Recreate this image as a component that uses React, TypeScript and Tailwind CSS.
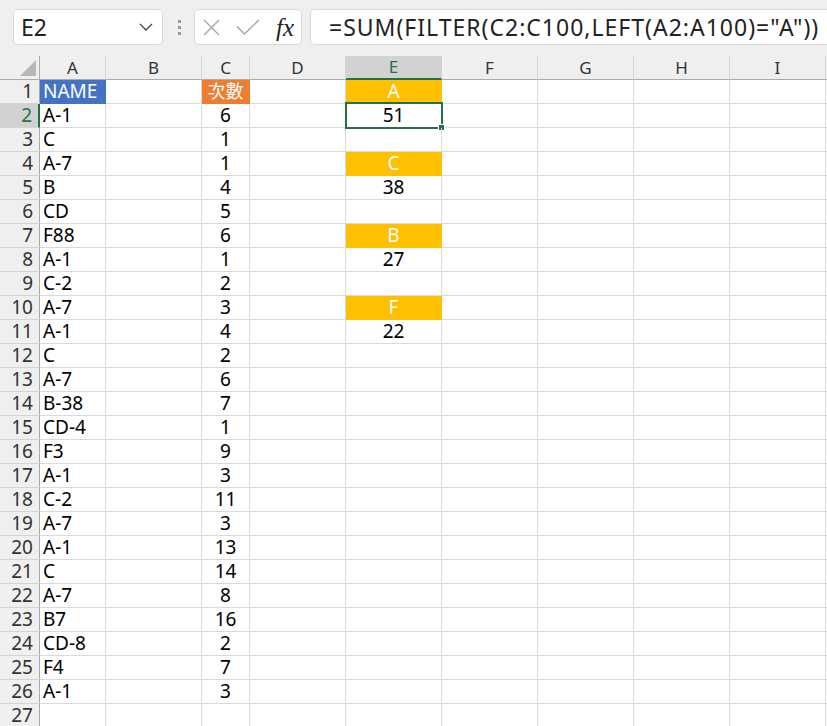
import React from "react";

const cols = [
  { key: "A", w: "w-[66px]" },
  { key: "B", w: "w-[96px]" },
  { key: "C", w: "w-[48px]" },
  { key: "D", w: "w-[96px]" },
  { key: "E", w: "w-[96px]" },
  { key: "F", w: "w-[96px]" },
  { key: "G", w: "w-[96px]" },
  { key: "H", w: "w-[96px]" },
  { key: "I", w: "w-[96px]" },
  { key: "", w: "w-[96px]" },
];

const names = [
  "NAME", "A-1", "C", "A-7", "B", "CD", "F88", "A-1", "C-2", "A-7", "A-1", "C", "A-7",
  "B-38", "CD-4", "F3", "A-1", "C-2", "A-7", "A-1", "C", "A-7", "B7", "CD-8", "F4", "A-1", "",
];

const counts = [
  "次數", "6", "1", "1", "4", "5", "6", "1", "2", "3", "4", "2", "6", "7", "1", "9", "3", "11",
  "3", "13", "14", "8", "16", "2", "7", "3", "",
];

// column E: header letters in yellow, sums below
const eCol: Record<number, { text: string; head?: boolean }> = {
  1: { text: "A", head: true },
  2: { text: "51" },
  4: { text: "C", head: true },
  5: { text: "38" },
  7: { text: "B", head: true },
  8: { text: "27" },
  10: { text: "F", head: true },
  11: { text: "22" },
};

const font = { fontFamily: '"Noto Sans", "Noto Sans CJK TC", sans-serif' };

function FormulaBar() {
  return (
    <div className="flex h-[56px] items-start bg-[#efefef] pt-[9px]">
      <div className="ml-[13px] flex h-[36px] w-[150px] items-center justify-between rounded-[5px] border border-[#d9d9d9] bg-white pl-[7px] pr-[9px]">
        <span className="text-[23px] leading-none text-[#222]">E2</span>
        <svg width="14" height="8" viewBox="0 0 14 8" fill="none">
          <path d="M1 1l6 6 6-6" stroke="#444" strokeWidth="1.3" />
        </svg>
      </div>
      <div className="ml-[15px] mr-[13px] flex h-[36px] flex-col justify-center gap-[3px]">
        <span className="block h-[3px] w-[3px] bg-[#9a9a9a]" />
        <span className="block h-[3px] w-[3px] bg-[#9a9a9a]" />
        <span className="block h-[3px] w-[3px] bg-[#9a9a9a]" />
      </div>
      <div className="flex h-[36px] w-[108px] items-center rounded-[5px] border border-[#d9d9d9] bg-white pl-[8px]">
        <svg width="17" height="17" viewBox="0 0 17 17" fill="none">
          <path d="M1 1l15 15M16 1L1 16" stroke="#a6a6a6" strokeWidth="1.4" />
        </svg>
        <svg className="ml-[16px]" width="24" height="16" viewBox="0 0 24 16" fill="none">
          <path d="M1 7.5l7.5 7.5L23 1" stroke="#a6a6a6" strokeWidth="1.4" />
        </svg>
        <span
          className="ml-[16px] text-[25px] italic leading-none text-[#222]"
          style={{ fontFamily: '"Liberation Serif", serif' }}
        >
          fx
        </span>
      </div>
      <div className="ml-[8px] flex h-[36px] flex-1 items-center rounded-l-[5px] border border-r-0 border-[#d9d9d9] bg-white pl-[18px]">
        <span className="whitespace-nowrap text-[23px] leading-none tracking-[1px] text-[#222]">
          =SUM(FILTER(C2:C100,LEFT(A2:A100)="A"))
        </span>
      </div>
    </div>
  );
}

function HeaderRow() {
  return (
    <div className="flex h-[24px] bg-[#efefef]">
      <div className="relative w-[40px] shrink-0 border-r border-b border-[#ababab]">
        <svg className="absolute left-[20px] top-[4px]" width="16" height="16" viewBox="0 0 16 16">
          <path d="M16 0V16H0Z" fill="#b7b7b7" />
        </svg>
      </div>
      {cols.map((c, i) =>
        c.key === "E" ? (
          <div
            key={i}
            className={`${c.w} flex shrink-0 items-center justify-center border-r border-b-2 border-r-[#cfcfcf] border-b-[#217346] bg-[#d2d2d2] text-[17px] text-[#217346]`}
          >
            {c.key}
          </div>
        ) : (
          <div
            key={i}
            className={`${c.w} flex shrink-0 items-center justify-center border-r border-b border-r-[#d4d4d4] border-b-[#ababab] text-[17px] text-[#333]`}
          >
            {c.key}
          </div>
        )
      )}
    </div>
  );
}

function Row({ n }: { n: number }) {
  const name = names[n - 1];
  const count = counts[n - 1];
  const e = eCol[n];
  const head = n === 1;
  const selected = n === 2;
  return (
    <div className="flex h-[24px]">
      {selected ? (
        <div className="flex w-[40px] shrink-0 items-center justify-end border-r-2 border-b border-r-[#217346] border-b-[#d4d4d4] bg-[#d2d2d2] pr-[6px] text-[19px] text-[#217346]">
          {n}
        </div>
      ) : (
        <div className="flex w-[40px] shrink-0 items-center justify-end border-r border-b border-r-[#ababab] border-b-[#d4d4d4] bg-[#efefef] pr-[6px] text-[19px] text-[#333]">
          {n}
        </div>
      )}
      {head ? (
        <div className="flex w-[66px] shrink-0 items-center border-r border-b border-[#4472c4] bg-[#4472c4] pl-[3px] text-[19px] text-white">
          {name}
        </div>
      ) : (
        <div className="flex w-[66px] shrink-0 items-center border-r border-b border-[#dadada] pl-[3px] text-[19px] text-black">
          {name}
        </div>
      )}
      <div className="w-[96px] shrink-0 border-r border-b border-[#dadada]" />
      {head ? (
        <div className="flex w-[48px] shrink-0 items-center justify-center border-r border-b border-[#ed7d31] bg-[#ed7d31] text-[18px] text-white">
          {count}
        </div>
      ) : (
        <div className="flex w-[48px] shrink-0 items-center justify-center border-r border-b border-[#dadada] text-[19px] text-black">
          {count}
        </div>
      )}
      <div className="w-[96px] shrink-0 border-r border-b border-[#dadada]" />
      {e?.head ? (
        <div className="flex w-[96px] shrink-0 items-center justify-center border-r border-b border-[#ffc000] bg-[#ffc000] text-[19px] text-white">
          {e.text}
        </div>
      ) : (
        <div className="relative flex w-[96px] shrink-0 items-center justify-center border-r border-b border-[#dadada] text-[19px] text-black">
          {e?.text}
          {selected && (
            <>
              <div className="absolute -left-[1px] -top-[2px] -right-[2px] -bottom-[2px] border-2 border-[#217346]" />
              <div className="absolute -right-[4px] -bottom-[4px] h-[7px] w-[7px] border border-white bg-[#217346]" />
            </>
          )}
        </div>
      )}
      <div className="w-[96px] shrink-0 border-r border-b border-[#dadada]" />
      <div className="w-[96px] shrink-0 border-r border-b border-[#dadada]" />
      <div className="w-[96px] shrink-0 border-r border-b border-[#dadada]" />
      <div className="w-[96px] shrink-0 border-r border-b border-[#dadada]" />
      <div className="w-[96px] shrink-0 border-r border-b border-[#dadada]" />
    </div>
  );
}

export default function App() {
  const rows = Array.from({ length: 27 }, (_, i) => i + 1);
  return (
    <div className="h-[726px] w-[827px] overflow-hidden bg-white" style={font}>
      <FormulaBar />
      <HeaderRow />
      {rows.map((n) => (
        <Row key={n} n={n} />
      ))}
    </div>
  );
}
